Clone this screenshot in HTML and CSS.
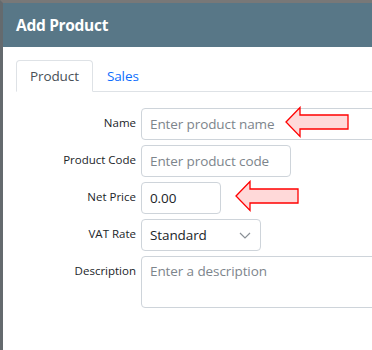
FILE: index.html
```html
<!DOCTYPE html>
<html lang="en">

<head>
    <meta charset="UTF-8">
    <meta name="viewport" content="width=device-width, initial-scale=1.0">
    <title>Add Product</title>
    <link rel="stylesheet" href="styles.css">
</head>

<body>
    <div class="window">
        <div class="modal-header">
            <h1 class="modal-title">Add Product</h1>
        </div>

        <div class="modal-body">
            <ul class="tabs">
                <li class="tab active">Product</li>
                <li class="tab">Sales</li>
            </ul>

            <form class="product-form">
                <label class="form-label" for="name">Name</label>
                <input class="form-input input-wide" id="name" type="text" placeholder="Enter product name">

                <label class="form-label" for="code">Product Code</label>
                <input class="form-input input-code" id="code" type="text" placeholder="Enter product code">

                <label class="form-label" for="price">Net Price</label>
                <input class="form-input input-price" id="price" type="text" value="0.00">

                <label class="form-label">VAT Rate</label>
                <div class="form-input form-select">
                    <span>Standard</span>
                    <svg class="chevron" width="12" height="7" viewBox="0 0 12 7">
                        <path d="M1 1 L6 6 L11 1" fill="none" stroke="#8a9096" stroke-width="1.2" />
                    </svg>
                </div>

                <label class="form-label" for="desc">Description</label>
                <textarea class="form-input input-wide form-textarea" id="desc" placeholder="Enter a description"></textarea>
            </form>
        </div>

        <!-- callout arrows -->
        <svg class="callout callout-name" width="66" height="33" viewBox="0 0 66 33">
            <polygon points="1,16 15,1.5 15,9 63,9 63,23 15,23 15,30.5" fill="#ffd9d9" stroke="#f00" stroke-width="1.3" />
        </svg>
        <svg class="callout callout-price" width="66" height="33" viewBox="0 0 66 33">
            <polygon points="1,16 15,1.5 15,9 63,9 63,23 15,23 15,30.5" fill="#ffd9d9" stroke="#f00" stroke-width="1.3" />
        </svg>
    </div>
</body>

</html>
```

FILE: styles.css
```css
* {
    margin: 0;
    padding: 0;
    box-sizing: border-box;
}

body {
    font-family: "Open Sans", "Noto Sans", sans-serif;
    color: #212529;
    background-color: #fff;
    overflow: hidden;
}

.window {
    position: relative;
    width: 372px;
    height: 350px;
    border-top: 3px solid #787878;
    border-left: 3px solid #646a6e;
    overflow: hidden;
}

.modal-header {
    height: 44px;
    background-color: #587787;
    padding-left: 13px;
    display: flex;
    align-items: center;
}

.modal-title {
    color: #fff;
    font-size: 15.5px;
    font-weight: 700;
    letter-spacing: -0.3px;
}

.modal-body {
    padding: 13px 0 0 13px;
}

.tabs {
    list-style: none;
    display: flex;
    border-bottom: 1px solid #dee2e6;
    height: 32px;
}

.tab {
    padding: 0 13px;
    height: 32px;
    line-height: 31px;
    font-size: 13.5px;
    letter-spacing: -0.1px;
    color: #0d6efd;
    border: 1px solid transparent;
    border-radius: 4px 4px 0 0;
}

.tab.active {
    color: #495057;
    background-color: #fff;
    border-color: #dee2e6 #dee2e6 #fff;
}

.product-form {
    display: grid;
    grid-template-columns: 120px auto;
    column-gap: 5px;
    row-gap: 5px;
    justify-items: start;
    margin-top: 16px;
}

.form-label {
    justify-self: end;
    font-size: 11.5px;
    color: #212529;
    padding-top: 7px;
}

.form-input {
    height: 32px;
    padding: 0 8px;
    font-family: inherit;
    font-size: 13.5px;
    letter-spacing: -0.1px;
    color: #212529;
    border: 1px solid #ced4da;
    border-radius: 4px;
    outline: none;
}

.form-input::placeholder {
    color: #7d858c;
}

.input-wide {
    width: 270px;
}

.input-code {
    width: 150px;
}

.input-price {
    width: 80px;
}

.form-select {
    width: 120px;
    display: flex;
    align-items: center;
    justify-content: space-between;
    padding-right: 9px;
}

.form-textarea {
    height: 52px;
    padding-top: 5px;
    resize: none;
}

.callout {
    position: absolute;
    left: 0;
    top: 0;
}

.callout-name {
    left: 282px;
    top: 103px;
}

.callout-price {
    left: 232px;
    top: 177px;
}
```
